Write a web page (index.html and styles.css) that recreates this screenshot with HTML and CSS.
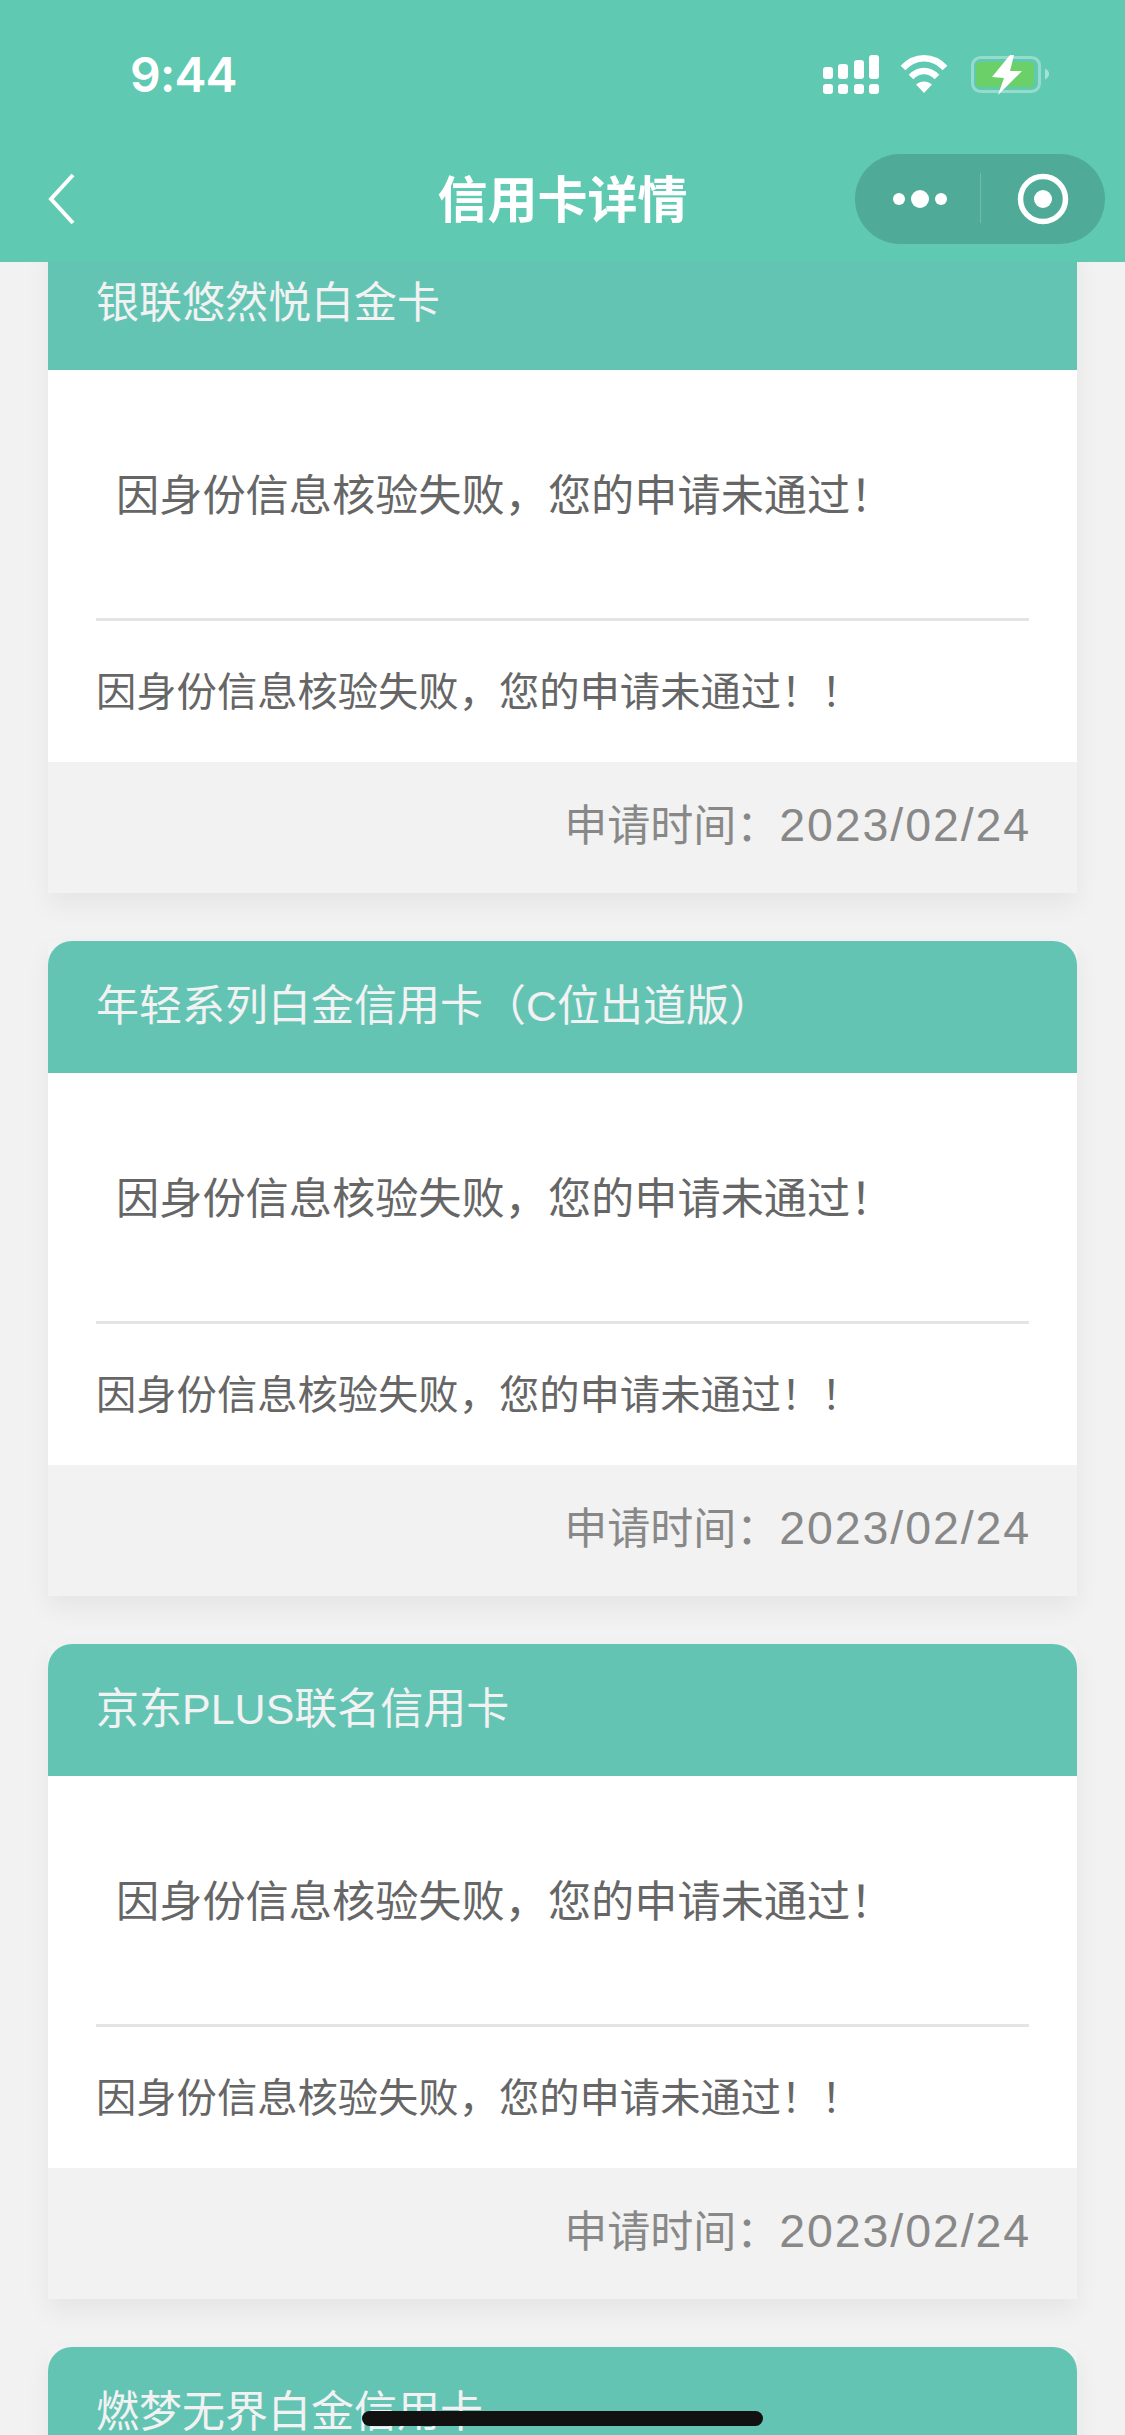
FILE: index.html
```html
<!DOCTYPE html>
<html lang="zh-CN">
<head>
<meta charset="utf-8">
<title>信用卡详情</title>
<link rel="stylesheet" href="styles.css">
</head>
<body>
<div class="screen">
  <header class="topbar">
    <div class="status">
      <span class="time">9:44</span>
      <svg class="status-icons" width="240" height="48" viewBox="820 50 240 48">
        <g fill="#fff">
          <rect x="823" y="67" width="10" height="12" rx="3"/><rect x="838" y="64" width="10" height="15" rx="3"/><rect x="854" y="60" width="10" height="19" rx="3"/><rect x="869" y="55" width="10" height="24" rx="3"/>
          <rect x="823" y="84" width="10" height="10" rx="3"/><rect x="838" y="84" width="10" height="10" rx="3"/><rect x="854" y="84" width="10" height="10" rx="3"/><rect x="869" y="84" width="10" height="10" rx="3"/>
        </g>
        <g fill="none" stroke="#fff" stroke-width="6.500">
          <path d="M903 68C915 55 933 55 945 68"/>
          <path d="M911 77C919 69 929 69 937 77"/>
        </g>
        <path d="M916 84.500C921 80.500 927 80.500 932 84.500L924 93Z" fill="#fff"/>
        <rect x="972.500" y="57.500" width="67" height="34" rx="8" fill="none" stroke="#fff" stroke-opacity=".35" stroke-width="3"/>
        <rect x="976" y="62" width="58" height="25" rx="4" fill="#6bd068"/>
        <path d="M1045 68.500C1048 70 1049 72 1049 74S1048 78 1045 79.500Z" fill="#fff" fill-opacity=".45"/>
        <path d="M1010 55L992 77L1004 78L998 95L1022 71L1010 71L1014 55Z" fill="#fff"/>
      </svg>
    </div>
    <div class="navbar">
      <svg class="back" width="28" height="52" viewBox="0 0 28 52"><path d="M25 2L3 26L25 50" fill="none" stroke="#fff" stroke-width="4"/></svg>
      <h1 class="title">信用卡详情</h1>
      <div class="capsule">
        <svg width="250" height="90" viewBox="0 0 250 90">
          <circle cx="44" cy="45" r="6" fill="#fff"/><circle cx="65" cy="45" r="9" fill="#fff"/><circle cx="86" cy="45" r="6" fill="#fff"/>
          <rect x="125" y="19" width="1" height="50" fill="#fff" fill-opacity=".2"/>
          <circle cx="188" cy="45" r="22.500" fill="none" stroke="#fff" stroke-width="5.500"/><circle cx="188" cy="45" r="9" fill="#fff"/>
        </svg>
      </div>
    </div>
  </header>
  <main class="list">
    <section class="card first">
      <div class="card-head">银联悠然悦白金卡</div>
      <div class="card-body">
        <p class="msg">因身份信息核验失败，您的申请未通过！</p>
        <p class="reason">因身份信息核验失败，您的申请未通过！！</p>
      </div>
      <div class="card-foot">申请时间：<span class="date">2023/02/24</span></div>
    </section>
    <section class="card">
      <div class="card-head">年轻系列白金信用卡（C位出道版）</div>
      <div class="card-body">
        <p class="msg">因身份信息核验失败，您的申请未通过！</p>
        <p class="reason">因身份信息核验失败，您的申请未通过！！</p>
      </div>
      <div class="card-foot">申请时间：<span class="date">2023/02/24</span></div>
    </section>
    <section class="card">
      <div class="card-head">京东PLUS联名信用卡</div>
      <div class="card-body">
        <p class="msg">因身份信息核验失败，您的申请未通过！</p>
        <p class="reason">因身份信息核验失败，您的申请未通过！！</p>
      </div>
      <div class="card-foot">申请时间：<span class="date">2023/02/24</span></div>
    </section>
    <section class="card">
      <div class="card-head">燃梦无界白金信用卡</div>
    </section>
  </main>
  <div class="home-bar"></div>
</div>
</body>
</html>
```
FILE: styles.css
```css
* { box-sizing: border-box; }
html, body { margin: 0; padding: 0; }
body { background: #f2f2f2; font-family: "Liberation Sans", "Noto Sans CJK SC", sans-serif; }
.screen { position: relative; width: 1125px; height: 2435px; overflow: hidden; }
.topbar { position: relative; z-index: 2; height: 262px; background: #5fc9b2; }
.status { position: relative; height: 154px; }
.time { position: absolute; left: 130px; top: 46px; font: 600 48px/58px Inter, sans-serif; letter-spacing: -.8px; color: #fff; }
.status-icons { position: absolute; left: 820px; top: 50px; }
.navbar { position: relative; display: flex; align-items: center; height: 90px; padding: 0 20px 0 48px; }
.back { flex: none; }
.title { position: absolute; left: 0; right: 0; top: -3px; margin: 0; text-align: center; font: 700 50px/90px "Noto Sans CJK SC", sans-serif; color: #fff; }
.capsule { margin-left: auto; width: 250px; height: 90px; border-radius: 45px; background: #4fab97; }
.capsule svg { display: block; }
.list { display: flex; flex-direction: column; gap: 48px; padding: 0 48px; margin-top: -24.500px; }
.card { flex: none; box-shadow: 0 12px 24px rgba(0,0,0,.055); }
.card-head { height: 132px; padding: 30px 48px 0; border-radius: 24px 24px 0 0; background: #64c4b4; color: #f2f2f2; font: 400 43px/70px "Liberation Sans", "Noto Sans CJK SC", sans-serif; }
.card.first .card-head { border-radius: 0; }
.card-body { height: 392.330px; padding: 0 48px; background: #fff; }
.msg { height: 251px; margin: 0; padding: 86px 20px 0; border-bottom: 3px solid #e4e4e4; color: #666; font: 400 43.200px/72px "Noto Sans CJK SC", sans-serif; }
.reason { margin: 0; padding-top: 36px; color: #666; font: 400 40.300px/64px "Noto Sans CJK SC", sans-serif; }
.card-foot { height: 131px; padding: 24px 46px 0 0; text-align: right; background: #f2f2f2; color: #888; font: 400 43px/72px "Noto Sans CJK SC", sans-serif; }
.date { font: 400 46.500px/72px "Liberation Sans", sans-serif; letter-spacing: 1.900px; }
.home-bar { position: absolute; z-index: 3; left: 362px; top: 2411px; width: 401px; height: 15px; border-radius: 8px; background: #111; }
```
